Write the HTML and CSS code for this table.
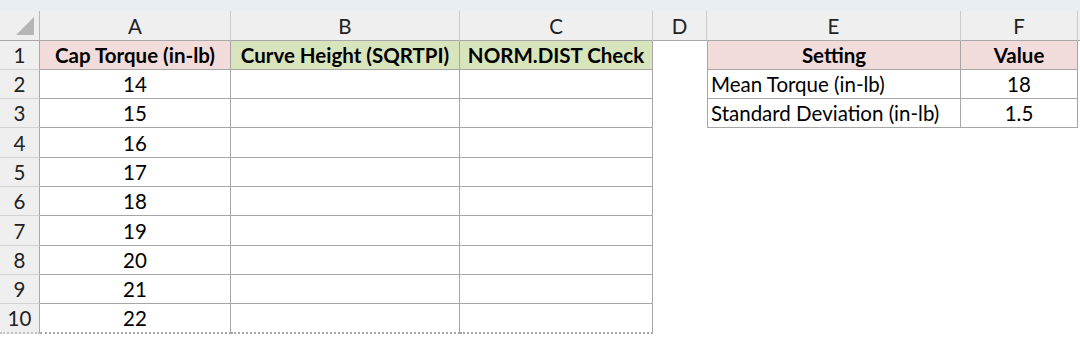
FILE: index.html
```html
<!DOCTYPE html>
<html>
<head>
<meta charset="utf-8">
<link rel="stylesheet" href="styles.css">
</head>
<body>
<div class="topbar"></div>
<div class="sheet">
  <div class="corner"><span class="tri"></span></div>
  <div class="colhdr">A</div>
  <div class="colhdr">B</div>
  <div class="colhdr">C</div>
  <div class="colhdr">D</div>
  <div class="colhdr">E</div>
  <div class="colhdr">F</div>
  <div class="colhdr last"></div>

  <div class="rowhdr">1</div>
  <div class="cell pink bold">Cap Torque (in-lb)</div>
  <div class="cell green bold">Curve Height (SQRTPI)</div>
  <div class="cell green bold">NORM.DIST Check</div>
  <div class="blank"></div>
  <div class="cell pink bold first">Setting</div>
  <div class="cell pink bold">Value</div>
  <div class="blank"></div>

  <div class="rowhdr">2</div>
  <div class="cell">14</div>
  <div class="cell"></div>
  <div class="cell"></div>
  <div class="blank"></div>
  <div class="cell first left">Mean Torque (in-lb)</div>
  <div class="cell">18</div>
  <div class="blank"></div>

  <div class="rowhdr">3</div>
  <div class="cell">15</div>
  <div class="cell"></div>
  <div class="cell"></div>
  <div class="blank"></div>
  <div class="cell first left">Standard Deviation (in-lb)</div>
  <div class="cell">1.5</div>
  <div class="blank"></div>

  <div class="rowhdr">4</div>
  <div class="cell">16</div>
  <div class="cell"></div>
  <div class="cell"></div>
  <div class="blank wide"></div>

  <div class="rowhdr">5</div>
  <div class="cell">17</div>
  <div class="cell"></div>
  <div class="cell"></div>
  <div class="blank wide"></div>

  <div class="rowhdr">6</div>
  <div class="cell">18</div>
  <div class="cell"></div>
  <div class="cell"></div>
  <div class="blank wide"></div>

  <div class="rowhdr">7</div>
  <div class="cell">19</div>
  <div class="cell"></div>
  <div class="cell"></div>
  <div class="blank wide"></div>

  <div class="rowhdr">8</div>
  <div class="cell">20</div>
  <div class="cell"></div>
  <div class="cell"></div>
  <div class="blank wide"></div>

  <div class="rowhdr">9</div>
  <div class="cell">21</div>
  <div class="cell"></div>
  <div class="cell"></div>
  <div class="blank wide"></div>

  <div class="rowhdr lastrow">10</div>
  <div class="cell lastrow">22</div>
  <div class="cell lastrow"></div>
  <div class="cell lastrow"></div>
  <div class="blank wide"></div>
</div>
</body>
</html>
```
FILE: styles.css
```css
html, body {
  margin: 0;
  padding: 0;
  background: #ffffff;
  overflow: hidden;
}
body {
  width: 1080px;
  height: 337px;
  font-family: "Lato", "Open Sans", sans-serif;
  font-size: 20.5px;
  color: #000;
}
.topbar {
  height: 11px;
  background: #e8eef1;
}
.sheet {
  display: grid;
  grid-template-columns: 40px 191px 229px 193px 54px 254px 117px 2px;
  grid-template-rows: 30px 29px 29px 29px 30px 29px 29px 30px 29px 29px 30px;
}
.corner {
  position: relative;
  background: #efefef;
  border-right: 1px solid #b8b8b8;
  border-bottom: 1px solid #a8a8a8;
  box-sizing: border-box;
}
.tri {
  position: absolute;
  right: 5px;
  bottom: 5px;
  width: 0;
  height: 0;
  border-left: 18px solid transparent;
  border-bottom: 18px solid #b5b5b5;
}
.colhdr {
  background: #efefef;
  border-right: 1px solid #cbcbcb;
  border-bottom: 1px solid #a8a8a8;
  box-sizing: border-box;
  display: flex;
  align-items: center;
  justify-content: center;
  color: #222;
}
.colhdr.last {
  border-right: none;
}
.rowhdr {
  background: #efefef;
  border-right: 1px solid #a8a8a8;
  border-bottom: 1px solid #d2d2d2;
  box-sizing: border-box;
  display: flex;
  align-items: center;
  justify-content: center;
  color: #222;
}
.cell {
  border-right: 1px solid #a6a6a6;
  border-bottom: 1px solid #a6a6a6;
  box-sizing: border-box;
  display: flex;
  align-items: center;
  justify-content: center;
  white-space: nowrap;
  overflow: hidden;
}
.cell.first {
  border-left: 1px solid #a6a6a6;
}
.cell.left {
  justify-content: flex-start;
  padding-left: 3px;
}
.cell.lastrow {
  border-bottom: 2px dotted #a6a6a6;
}
.rowhdr.lastrow {
  border-bottom: 2px dotted #c4c4c4;
}
.bold {
  font-weight: 700;
}
.pink {
  background: #f2dcdb;
}
.green {
  background: #d8e4bc;
}
.blank {
  background: #fff;
}
.blank.wide {
  grid-column: span 4;
}
```
